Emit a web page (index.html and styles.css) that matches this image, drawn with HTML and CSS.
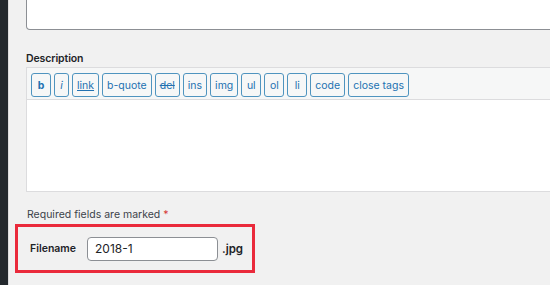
FILE: index.html
```html
<!DOCTYPE html>
<html lang="en">
<head>
    <meta charset="UTF-8">
    <meta name="viewport" content="width=device-width, initial-scale=1.0">
    <title>Submit Photo</title>
    <link rel="stylesheet" href="styles.css">
</head>
<body>
    <div class="sidebar"></div>

    <div class="main">
        <div class="title-field"></div>

        <label class="field-label">Description</label>
        <div class="editor">
            <div class="toolbar">
                <button class="qt bold">b</button>
                <button class="qt italic">i</button>
                <button class="qt underline">link</button>
                <button class="qt">b-quote</button>
                <button class="qt strike">del</button>
                <button class="qt">ins</button>
                <button class="qt">img</button>
                <button class="qt">ul</button>
                <button class="qt">ol</button>
                <button class="qt">li</button>
                <button class="qt">code</button>
                <button class="qt">close tags</button>
            </div>
            <div class="editor-body"></div>
        </div>

        <p class="required">Required fields are marked <span class="star">*</span></p>

        <div class="filename-box">
            <span class="filename-label">Filename</span>
            <input type="text" class="filename-input" value="2018-1">
            <span class="ext">.jpg</span>
        </div>
    </div>
</body>
</html>
```

FILE: styles.css
```css
body {
    margin: 0;
    display: flex;
    height: 285px;
    overflow: hidden;
    background-color: #f1f1f1;
    font-family: Inter, "Noto Sans", sans-serif;
    color: #3c434a;
}
.sidebar {
    width: 8px;
    flex-shrink: 0;
    background-color: #23282d;
    border-right: 1px solid #dcdcde;
}
.main {
    flex: 1;
    padding-left: 17px;
    margin-right: -20px;
}
.title-field {
    height: 34px;
    margin-top: -5px;
    background-color: #fff;
    border: 1px solid #8c8f94;
    border-top: none;
    border-radius: 0 0 0 4px;
}
.field-label {
    display: block;
    margin-top: 22px;
    font-size: 10.5px;
    font-weight: 600;
    letter-spacing: -0.1px;
    color: #1d2327;
    line-height: 14px;
}
.editor {
    margin-top: 1px;
    border: 1px solid #dcdcde;
    border-right: none;
}
.toolbar {
    display: flex;
    gap: 3px;
    padding: 5px 4px 2px;
    background-color: #f6f7f7;
    border-bottom: 1px solid #dcdcde;
}
.qt {
    height: 24px;
    margin: 0;
    padding: 0 4px;
    min-width: 20px;
    background-color: #f6f7f7;
    border: 1.5px solid #4f94bf;
    border-radius: 3px;
    font-family: Inter, "Noto Sans", sans-serif;
    font-size: 10.5px;
    color: #2271b1;
}
.bold {
    font-weight: bold;
}
.italic {
    min-width: 15px;
    font-style: italic;
}
.underline {
    text-decoration: underline;
}
.strike {
    text-decoration: line-through;
}
.editor-body {
    height: 91px;
    background-color: #fff;
}
.required {
    margin: 16px 0 0 1px;
    font-size: 10.5px;
    line-height: 14px;
    color: #3c434a;
}
.star {
    color: #d63638;
}
.filename-box {
    display: flex;
    align-items: center;
    width: 234px;
    height: 43px;
    margin: 2px 0 0 -11px;
    border: 3px solid #ea2a3b;
}
.filename-label {
    margin-left: 12px;
    width: 57px;
    font-size: 10.5px;
    font-weight: 600;
    color: #1d2327;
}
.filename-input {
    box-sizing: border-box;
    width: 131px;
    height: 24px;
    padding: 0 7px;
    border: 1px solid #8c8f94;
    border-radius: 4px;
    font-family: Inter, "Noto Sans", sans-serif;
    font-size: 12px;
    color: #1d2327;
}
.ext {
    margin-left: 4px;
    font-size: 11.5px;
    font-weight: 600;
    color: #1d2327;
}
```
